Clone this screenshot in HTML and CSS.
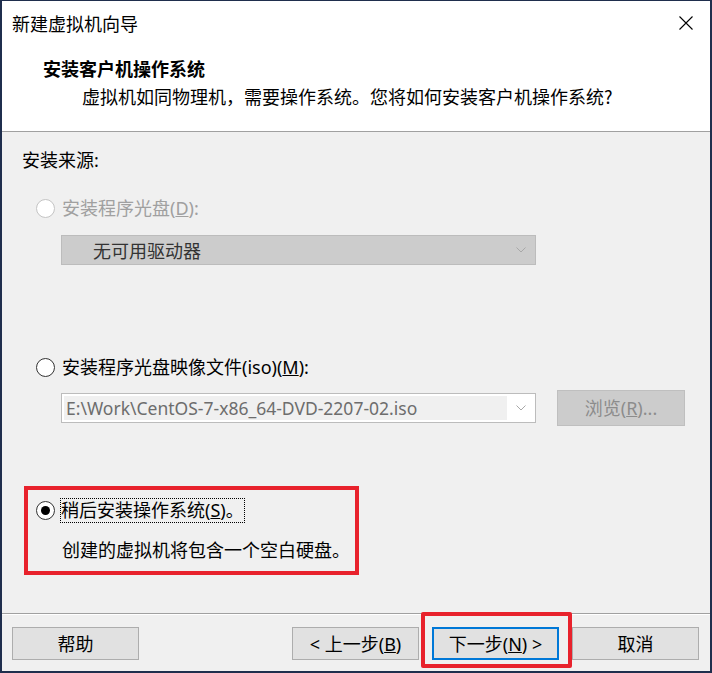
FILE: index.html
```html
<!DOCTYPE html>
<html>
<head>
  <meta charset="UTF-8">
  <title>新建虚拟机向导</title>
  <link rel="stylesheet" href="styles.css">
</head>
<body>
  <div class="window">
    <div class="titlebar">
      <span class="title">新建虚拟机向导</span>
      <svg class="close" width="14" height="14" viewBox="0 0 14 14">
        <path d="M0.5 0.5 L13.5 13.5 M13.5 0.5 L0.5 13.5" stroke="#000" stroke-width="1.1" fill="none"/>
      </svg>
    </div>
    <div class="header">
      <div class="h-title">安装客户机操作系统</div>
      <div class="h-sub">虚拟机如同物理机，需要操作系统。您将如何安装客户机操作系统?</div>
    </div>
    <div class="content">
      <div class="section-label">安装来源:</div>

      <div class="option disabled first">
        <span class="radio"></span>
        <span class="label">安装程序光盘(<u>D</u>):</span>
      </div>
      <div class="combo combo-disabled">
        <span class="combo-text">无可用驱动器</span>
        <svg class="chevron" width="10" height="6" viewBox="0 0 10 6"><path d="M0.5 0.5 L5 5 L9.5 0.5" stroke="#a8a8a8" fill="none"/></svg>
      </div>

      <div class="option second">
        <span class="radio"></span>
        <span class="label">安装程序光盘映像文件(iso)(<u>M</u>):</span>
      </div>
      <div class="iso-row">
        <div class="combo combo-iso">
          <span class="combo-field">E:\Work\CentOS-7-x86_64-DVD-2207-02.iso</span>
          <svg class="chevron" width="10" height="6" viewBox="0 0 10 6"><path d="M0.5 0.5 L5 5 L9.5 0.5" stroke="#a8a8a8" fill="none"/></svg>
        </div>
        <button class="btn btn-disabled browse">浏览(<u>R</u>)...</button>
      </div>

      <div class="mark-box">
        <div class="option">
          <span class="radio checked"></span>
          <span class="label focus">稍后安装操作系统(<u>S</u>)。</span>
        </div>
        <div class="note">创建的虚拟机将包含一个空白硬盘。</div>
      </div>
    </div>
    <div class="footer">
      <button class="btn">帮助</button>
      <button class="btn back">&lt; 上一步(<u>B</u>)</button>
      <span class="next-wrap">
        <button class="btn btn-default">下一步(<u>N</u>) &gt;</button>
        <span class="mark"></span>
      </span>
      <button class="btn">取消</button>
    </div>
  </div>
</body>
</html>
```

FILE: styles.css
```css
html, body {
  margin: 0;
  padding: 0;
  height: 100%;
  background: #f0f0f0;
  font-family: "Noto Sans", "Noto Sans CJK SC", sans-serif;
  font-size: 18px;
  color: #000;
  overflow: hidden;
}
.window {
  box-sizing: border-box;
  width: 712px;
  height: 673px;
  border: 2px solid #1f2e4d;
  border-top-width: 1px;
  display: flex;
  flex-direction: column;
  background: #f0f0f0;
}
.titlebar {
  height: 44px;
  flex: none;
  display: flex;
  align-items: center;
  justify-content: space-between;
  padding: 0 17px 0 10px;
  background: #fff;
}
.title {
  font-family: "Noto Sans CJK SC", sans-serif;
  font-size: 18px;
  line-height: 22px;
}
.header {
  box-sizing: border-box;
  height: 87px;
  flex: none;
  background: #fff;
  border-bottom: 1px solid #a0a0a0;
  padding: 12px 0 0 41px;
}
.h-title {
  font-family: "Noto Sans CJK SC", sans-serif;
  font-weight: bold;
  line-height: 22px;
}
.h-sub {
  font-family: "Noto Sans CJK SC", sans-serif;
  line-height: 22px;
  margin: 6px 0 0 39px;
}
.content {
  flex: 1;
  padding-left: 20px;
}
.section-label {
  margin-top: 18px;
  line-height: 20px;
}
.option {
  display: flex;
  align-items: center;
  height: 20px;
  padding-left: 14px;
  line-height: 20px;
  white-space: nowrap;
}
.option.first { margin-top: 28px; }
.option.second { margin-top: 92px; }
.option .label { margin-left: 7px; }
.option.disabled { color: #a0a0a0; }
.radio {
  box-sizing: border-box;
  width: 19px;
  height: 19px;
  border: 1px solid #333;
  border-radius: 50%;
  background: #fff;
  flex: none;
  display: flex;
  align-items: center;
  justify-content: center;
}
.disabled .radio { border-color: #c4c4c4; }
.radio.checked::after {
  content: "";
  width: 9px;
  height: 9px;
  border-radius: 50%;
  background: #000;
}
.combo {
  box-sizing: border-box;
  width: 475px;
  height: 30px;
  display: flex;
  align-items: center;
  justify-content: space-between;
  border: 1px solid #bcbcbc;
}
.combo-disabled {
  margin: 17px 0 0 39px;
  background: #cccccc;
  padding: 0 9px 0 31px;
  color: #333;
}
.chevron { flex: none; }
.iso-row {
  display: flex;
  align-items: center;
  gap: 21px;
  margin: 13px 0 0 39px;
}
.combo-iso {
  background: #fff;
  padding: 2px 9px 2px 2px;
}
.combo-field {
  box-sizing: border-box;
  width: 443px;
  height: 24px;
  line-height: 24px;
  padding-left: 2px;
  background: #f0f0f0;
  color: #6d6d6d;
  font-size: 17.5px;
  white-space: nowrap;
  overflow: hidden;
}
.btn {
  box-sizing: border-box;
  width: 127px;
  height: 33px;
  border: 1px solid #adadad;
  background: #e1e1e1;
  font-family: "Noto Sans", "Noto Sans CJK SC", sans-serif;
  font-size: 18px;
  color: #000;
  padding: 0;
  line-height: 20px;
}
.btn-disabled {
  background: #cccccc;
  border-color: #bfbfbf;
  color: #8c8c8c;
}
.browse {
  width: 128px;
  height: 36px;
}
.mark-box {
  box-sizing: border-box;
  width: 335px;
  height: 89px;
  margin: 60px 0 0 2px;
  border: 4px solid #e8222c;
  padding: 10px 0 0 8px;
}
.mark-box .option { padding-left: 0; }
.focus {
  outline: 1px dotted #000;
  padding: 1px 0 2px;
  margin-left: 6px !important;
}
.note {
  margin: 20px 0 0 26px;
  line-height: 20px;
  white-space: nowrap;
}
.footer {
  box-sizing: border-box;
  height: 58px;
  flex: none;
  display: flex;
  align-items: flex-start;
  gap: 13px;
  padding: 13px 11px 0 10px;
  border-top: 1px solid #a0a0a0;
  box-shadow: inset 0 1px #fff;
}
.footer .back { margin-left: auto; }
.next-wrap {
  position: relative;
  display: block;
}
.btn-default {
  border: 2px solid #0078d7;
}
.mark {
  position: absolute;
  left: -11px;
  right: -13px;
  top: -15px;
  bottom: -8px;
  border: 4px solid #e8222c;
  border-radius: 2px;
}
```
